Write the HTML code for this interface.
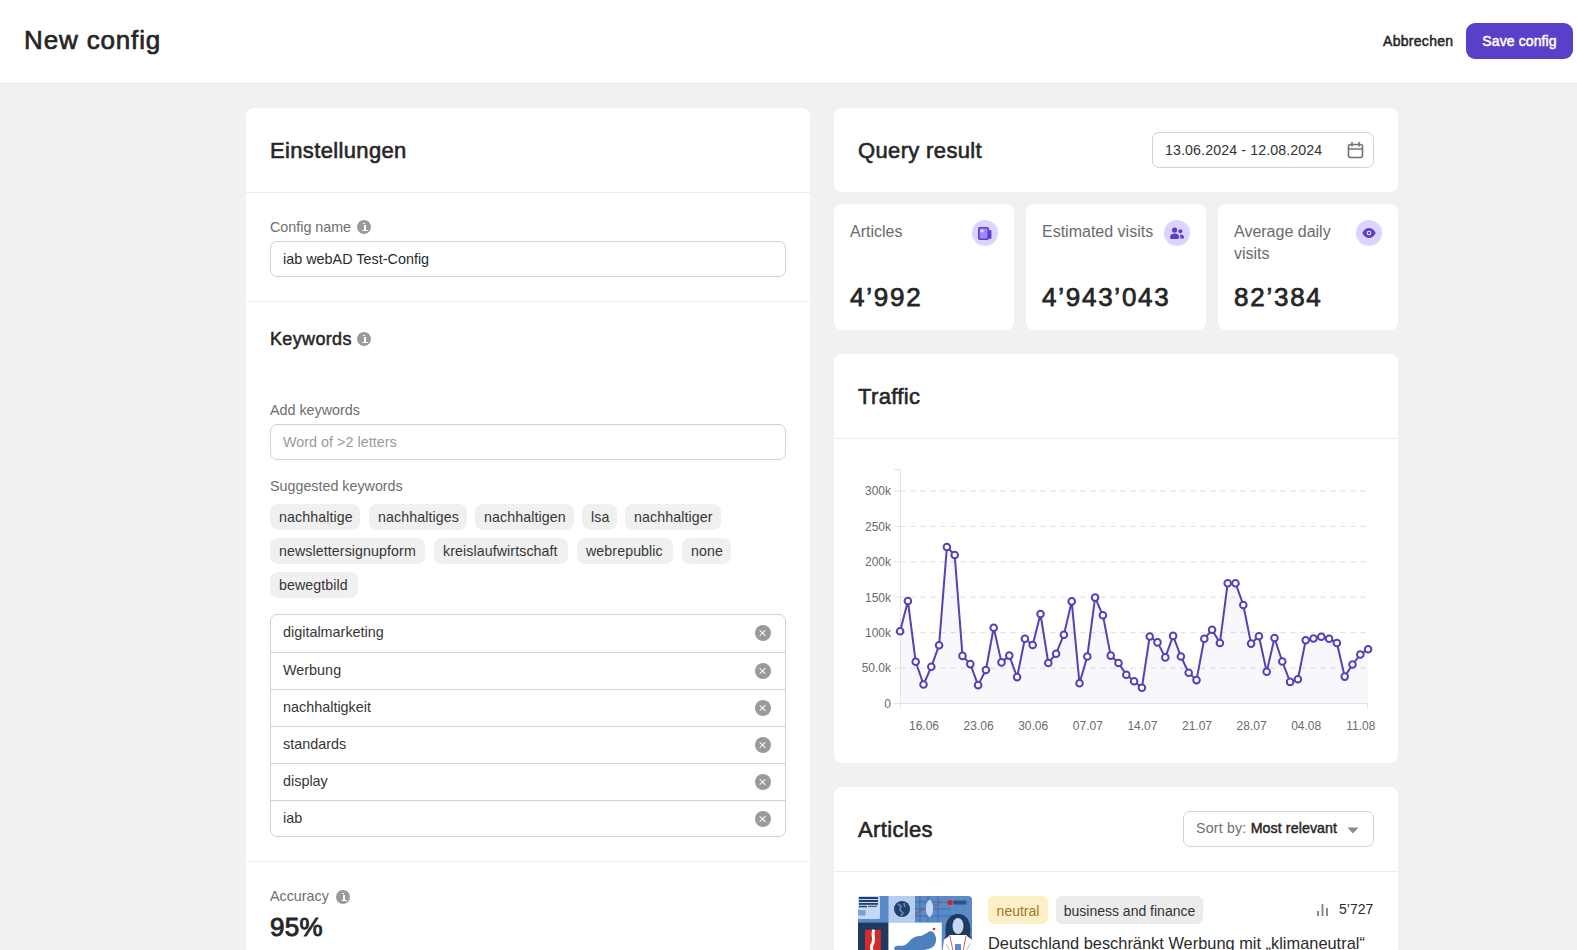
<!DOCTYPE html>
<html><head><meta charset="utf-8">
<style>
*{box-sizing:border-box;margin:0;padding:0}
html,body{width:1577px;height:950px;overflow:hidden;background:#f1f1f3;font-family:"Liberation Sans",sans-serif;color:#262626}
.abs{position:absolute}
#hdr{position:absolute;left:0;top:0;width:1577px;height:84px;background:#fff;border-bottom:1px solid #e8e8ea}
#hdr h1{position:absolute;left:24px;top:24px;font-size:26px;font-weight:400;-webkit-text-stroke:0.7px #262626;letter-spacing:0.85px;line-height:32px;color:#262626}
#cancel{position:absolute;left:1383px;top:32px;font-size:14px;font-weight:400;-webkit-text-stroke:0.5px #262626;line-height:18px;color:#262626;letter-spacing:0.3px}
#save{position:absolute;left:1466px;top:23px;width:107px;height:36px;background:#5a3fc8;border-radius:9px;color:#fff;font-size:14px;font-weight:400;-webkit-text-stroke:0.5px #fff;line-height:36px;text-align:center;letter-spacing:0.1px}
.card{position:absolute;background:#fff;border-radius:8px}
.divider{position:absolute;left:0;right:0;height:1px;background:#ececee}
.h2{position:absolute;font-size:22px;font-weight:400;-webkit-text-stroke:0.6px #262626;letter-spacing:0.35px;line-height:27px;color:#262626}
.label{position:absolute;font-size:14.3px;line-height:18px;color:#6e6e6e}
.info{display:inline-block;width:14px;height:14px;border-radius:50%;background:#9a9a9a;position:absolute}
.info:after{content:"";position:absolute;left:5px;top:5px;width:3px;height:5px;border-left:1px solid #9a9a9a;border-bottom:1.2px solid #fff;background:linear-gradient(#9a9a9a,#9a9a9a) 0 0/1px 1px no-repeat,linear-gradient(#fff,#fff) 1px 0/2px 5px no-repeat;box-sizing:content-box;padding:0 1px}
.info:before{content:"";position:absolute;left:6.2px;top:2.6px;width:1.8px;height:1.6px;background:#fff}
.input{position:absolute;border:1px solid #d2d2d4;border-radius:7px;background:#fff;font-size:14.4px;line-height:34px;padding-left:12px;color:#2b2b2b}
.chip{position:absolute;height:26px;background:#f0f0f1;border-radius:8px;font-size:14.2px;line-height:27px;letter-spacing:0.1px;padding:0 9px;color:#363636;white-space:nowrap}
.kwlist{position:absolute;border:1px solid #d2d2d4;border-radius:7px;overflow:hidden}
.kwrow{position:absolute;left:0;right:0;height:37px;border-top:1px solid #d2d2d4;font-size:14.4px;line-height:35.5px;padding-left:12px;color:#363636}
.kwrow{height:38px}
.xic{position:absolute;left:484px;top:10px;width:16px;height:16px;border-radius:50%;background:#9a9a9a}
.xic:before,.xic:after{content:"";position:absolute;left:7.4px;top:4px;width:1.2px;height:8px;background:#fff;transform:rotate(45deg)}
.xic:after{transform:rotate(-45deg)}
.slabel{position:absolute;left:16px;top:16.5px;font-size:16px;line-height:22px;color:#6b6b6e}
.sicon{position:absolute;left:138px;top:16px;width:26px;height:26px;border-radius:50%;background:#dcd3ff;display:flex;align-items:center;justify-content:center}
.sval{position:absolute;left:16px;top:77px;font-size:26px;font-weight:400;-webkit-text-stroke:0.75px #262626;line-height:32px;color:#262626;letter-spacing:1.75px}
.tag{position:absolute;height:27.5px;border-radius:6px;font-size:14px;line-height:30px;text-align:center;white-space:nowrap}
</style></head>
<body>
<div id="hdr">
  <h1>New config</h1>
  <div id="cancel">Abbrechen</div>
  <div id="save">Save config</div>
</div>

<!-- LEFT CARD -->
<div class="card" style="left:246px;top:108px;width:564px;height:900px">
  <div class="h2" style="left:24px;top:29px">Einstellungen</div>
  <div class="divider" style="top:84px"></div>
  <div class="label" style="left:24px;top:110px">Config name</div>
  <span class="info" style="left:111px;top:112px"></span>
  <div class="input" style="left:24px;top:133px;width:516px;height:36px">iab webAD Test-Config</div>
  <div class="divider" style="top:193px"></div>
  <div class="h2" style="left:24px;top:219px;font-size:18px;line-height:24px;-webkit-text-stroke:0.5px #262626">Keywords</div>
  <span class="info" style="left:111px;top:224px"></span>
  <div class="label" style="left:24px;top:293px">Add keywords</div>
  <div class="input" style="left:24px;top:316px;width:516px;height:36px;color:#9a9a9a">Word of &gt;2 letters</div>
  <div class="label" style="left:24px;top:369px">Suggested keywords</div>
  <div class="chip" style="left:24px;top:396px;width:90px">nachhaltige</div>
  <div class="chip" style="left:123px;top:396px;width:98px">nachhaltiges</div>
  <div class="chip" style="left:229px;top:396px;width:99px">nachhaltigen</div>
  <div class="chip" style="left:336px;top:396px;width:35px">lsa</div>
  <div class="chip" style="left:379px;top:396px;width:96px">nachhaltiger</div>
  <div class="chip" style="left:24px;top:430px;width:155px">newslettersignupform</div>
  <div class="chip" style="left:188px;top:430px;width:134px">kreislaufwirtschaft</div>
  <div class="chip" style="left:331px;top:430px;width:96px">webrepublic</div>
  <div class="chip" style="left:436px;top:430px;width:49px">none</div>
  <div class="chip" style="left:24px;top:464px;width:88px">bewegtbild</div>
  <div class="kwlist" style="left:24px;top:506px;width:516px;height:223px">
    <div class="kwrow" style="top:0px;border-top:none"><span>digitalmarketing</span><i class="xic"></i></div>
    <div class="kwrow" style="top:37px"><span>Werbung</span><i class="xic"></i></div>
    <div class="kwrow" style="top:74px"><span>nachhaltigkeit</span><i class="xic"></i></div>
    <div class="kwrow" style="top:111px"><span>standards</span><i class="xic"></i></div>
    <div class="kwrow" style="top:148px"><span>display</span><i class="xic"></i></div>
    <div class="kwrow" style="top:185px"><span>iab</span><i class="xic"></i></div>
  </div>
  <div class="divider" style="top:753px"></div>
  <div class="label" style="left:24px;top:779px">Accuracy</div>
  <span class="info" style="left:90px;top:782px"></span>
  <div class="abs" style="left:24px;top:803px;font-size:26px;font-weight:400;-webkit-text-stroke:0.9px #262626;letter-spacing:0.3px;line-height:32px;color:#262626">95%</div>
</div>

<!-- RIGHT COLUMN -->
<div class="card" style="left:834px;top:108px;width:564px;height:84px">
  <div class="h2" style="left:24px;top:29px">Query result</div>
  <div class="input" style="left:318px;top:24px;width:222px;height:36px;font-size:14.2px;letter-spacing:0.12px;color:#333">13.06.2024 - 12.08.2024
    <svg class="abs" style="left:194px;top:7.5px" width="17" height="18" viewBox="0 0 17 18"><g fill="none" stroke="#727272" stroke-width="1.6" stroke-linecap="round"><rect x="1.5" y="3.5" width="14" height="13" rx="2"/><path d="M1.5 8H15.5M5 1.5V5M12 1.5V5"/></g></svg>
  </div>
</div>
<div class="card" style="left:834px;top:204px;width:180px;height:126px">
  <div class="slabel">Articles</div>
  <div class="sicon"><svg width="14" height="13" viewBox="0 0 14 13"><rect x="0.8" y="0.8" width="9.4" height="11.4" rx="1" fill="#9c88ff" stroke="#5a3fc8" stroke-width="1.6"/><rect x="2.5" y="2.6" width="3" height="2.6" fill="#e6defe"/><rect x="11" y="3" width="2.4" height="9" rx="1" fill="#5a3fc8"/></svg></div>
  <div class="sval">4’992</div>
</div>
<div class="card" style="left:1026px;top:204px;width:180px;height:126px">
  <div class="slabel">Estimated visits</div>
  <div class="sicon"><svg width="14" height="13" viewBox="0 0 14 13"><circle cx="4.6" cy="3" r="2.6" fill="#5a3fc8"/><path d="M0 10.6C0 7.6 2 6.6 4.6 6.6S9.2 7.6 9.2 10.6C9.2 11.6 8.4 12 7.6 12H1.6C.8 12 0 11.6 0 10.6Z" fill="#5a3fc8"/><circle cx="10.4" cy="4.2" r="2" fill="#5a3fc8"/><path d="M10 7.6C12.6 7.4 14 8.6 14 10.4C14 11.3 13.4 11.6 12.8 11.6H10.2C10.4 10 10.4 8.8 10 7.6Z" fill="#5a3fc8"/></svg></div>
  <div class="sval">4’943’043</div>
</div>
<div class="card" style="left:1218px;top:204px;width:180px;height:126px">
  <div class="slabel">Average daily<br>visits</div>
  <div class="sicon"><svg width="14" height="10" viewBox="0 0 14 10"><path d="M0.3 5C2 1.6 4.4 0 7 0S12 1.6 13.7 5C12 8.4 9.6 10 7 10S2 8.4 0.3 5Z" fill="#5a3fc8"/><circle cx="7" cy="5" r="2.3" fill="#e6defe"/><circle cx="7" cy="5" r="1.1" fill="#3d2a96"/></svg></div>
  <div class="sval">82’384</div>
</div>
<div class="card" style="left:834px;top:354px;width:564px;height:409px">
  <div class="h2" style="left:24px;top:29px">Traffic</div>
  <div class="divider" style="top:84px"></div>
</div>
<div class="card" style="left:834px;top:787px;width:564px;height:300px;overflow:hidden">
  <div class="h2" style="left:24px;top:29px">Articles</div>
  <div class="input" style="left:349px;top:24px;width:191px;height:36px;font-size:14.2px;line-height:32.5px;color:#6e6e6e;letter-spacing:0.2px">Sort by: <span style="color:#262626;-webkit-text-stroke:0.45px #262626;letter-spacing:0.1px">Most relevant</span>
    <svg class="abs" style="left:163px;top:15px" width="12" height="7" viewBox="0 0 12 7"><path d="M0.5 0.5H11.5L6 6.5Z" fill="#8a8a8c"/></svg>
  </div>
  <div class="divider" style="top:84px"></div>
  <svg class="abs" style="left:24px;top:109px" width="114" height="60" viewBox="0 0 114 60">
    <defs><clipPath id="ic"><rect x="0" y="0" width="114" height="80" rx="4"/></clipPath></defs>
    <g clip-path="url(#ic)">
      <rect x="0" y="0" width="114" height="60" fill="#5a8ac8"/>
      <rect x="0" y="0" width="22" height="23" rx="1.5" fill="#c6d9f2"/>
      <g fill="#23406a"><rect x="1" y="1" width="19" height="2"/><rect x="1" y="4" width="19" height="2"/><rect x="1" y="7" width="19" height="1.8"/><rect x="1" y="9.8" width="8" height="1.5"/><rect x="10" y="9.8" width="9" height="1"/></g>
      <rect x="0" y="14" width="7.5" height="5.5" fill="#7aa2d6"/>
      <rect x="30.5" y="0" width="26.5" height="26.6" fill="#b6cff0"/>
      <circle cx="44" cy="13" r="8" fill="#23406a"/>
      <path d="M40 8 L43 10 L42 14 L45 17 L43 20 M46 7 L47 11" stroke="#5a8ac8" stroke-width="1.6" fill="none"/>
      <g stroke="#3a66a0" stroke-width="0.8"><path d="M57 6H100M57 13H92M57 20H94M62 0V26M70 0V26M80 0V26"/></g>
      <ellipse cx="71.5" cy="12.5" rx="3.6" ry="8.4" fill="#c6d9f2"/>
      <path d="M57 18L66 13M75 8L78 10L83 6" stroke="#b44" stroke-width="1" fill="none"/>
      <circle cx="92" cy="6.5" r="2.6" fill="#d82020"/>
      <rect x="95.5" y="4.5" width="13" height="4" fill="#23406a" opacity="0.75"/>
      <rect x="0" y="26.6" width="30.5" height="40" fill="#1e3a5e"/>
      <rect x="7" y="33.7" width="15.8" height="30" fill="#d42a2a"/>
      <path d="M16 33.7 C13 39 18 43 14 49 C12 53 16 56 15 60" stroke="#fff" stroke-width="3" fill="none"/>
      <rect x="30.5" y="26.6" width="53.2" height="40" fill="#fff"/>
      <path d="M36 52 C38 48 43 51 47 49 L51 46 C54 41 59 40 63 40 L69 37 C72 34 76 35 77 39 C79 43 78 47 76 50 C72 54 62 55 56 54 L46 56 C42 56 37 56 36 52Z" fill="#4e80c0"/>
      <circle cx="76" cy="33" r="1.3" fill="#d82020"/>
      <path d="M88 40 C86 28 90 18 100 18 C110 18 114 28 112 40 L113.6 42 L86 42Z" fill="#1e3a5e"/>
      <ellipse cx="100" cy="30" rx="5.5" ry="8" fill="#c6d9f2"/>
      <path d="M83.7 60 L86 44 L92 39 L108 39 L114 44 L114 60Z" fill="#fff"/>
      <path d="M92 40 L96 60 M108 40 L104 60" stroke="#c33" stroke-width="0.8"/>
      <rect x="97" y="48" width="6" height="12" fill="#5a8ac8"/>
      <path d="M88 48 L94 58 M112 48 L106 58" stroke="#889" stroke-width="0.6"/>
    </g>
  </svg>
  <div class="tag" style="left:154px;top:109px;width:60px;background:#fdefc6;color:#9b7a2c">neutral</div>
  <div class="tag" style="left:222px;top:109px;width:147px;background:#ececed;color:#333">business and finance</div>
  <svg class="abs" style="left:483px;top:117px" width="11" height="12" viewBox="0 0 11 12"><g fill="#8c8c8e"><rect x="0" y="7" width="2" height="5"/><rect x="4.5" y="0" width="2" height="12"/><rect x="9" y="4" width="2" height="8"/></g></svg>
  <div class="abs" style="left:505px;top:113px;font-size:14px;line-height:18px;color:#2b2b2b">5’727</div>
  <div class="abs" style="left:154px;top:146px;font-size:16.4px;line-height:20px;color:#2b2b2b;white-space:nowrap">Deutschland beschränkt Werbung mit „klimaneutral“</div>
</div>
<!--CHART-->
<svg class="abs" style="left:0;top:0;pointer-events:none" width="1577" height="950" viewBox="0 0 1577 950">
<g font-family="Liberation Sans" font-size="12" fill="#6a6a6e"><line x1="894" y1="703.5" x2="900.5" y2="703.5" stroke="#e3e3e6" stroke-width="1"/><text x="891" y="707.7" text-anchor="end">0</text><line x1="900.5" y1="668.1" x2="1368" y2="668.1" stroke="#dcdcdf" stroke-width="1" stroke-dasharray="5 5"/><line x1="894" y1="668.1" x2="900.5" y2="668.1" stroke="#e3e3e6" stroke-width="1"/><text x="891" y="672.3" text-anchor="end">50.0k</text><line x1="900.5" y1="632.7" x2="1368" y2="632.7" stroke="#dcdcdf" stroke-width="1" stroke-dasharray="5 5"/><line x1="894" y1="632.7" x2="900.5" y2="632.7" stroke="#e3e3e6" stroke-width="1"/><text x="891" y="636.9" text-anchor="end">100k</text><line x1="900.5" y1="597.2" x2="1368" y2="597.2" stroke="#dcdcdf" stroke-width="1" stroke-dasharray="5 5"/><line x1="894" y1="597.2" x2="900.5" y2="597.2" stroke="#e3e3e6" stroke-width="1"/><text x="891" y="601.5" text-anchor="end">150k</text><line x1="900.5" y1="561.8" x2="1368" y2="561.8" stroke="#dcdcdf" stroke-width="1" stroke-dasharray="5 5"/><line x1="894" y1="561.8" x2="900.5" y2="561.8" stroke="#e3e3e6" stroke-width="1"/><text x="891" y="566.0" text-anchor="end">200k</text><line x1="900.5" y1="526.4" x2="1368" y2="526.4" stroke="#dcdcdf" stroke-width="1" stroke-dasharray="5 5"/><line x1="894" y1="526.4" x2="900.5" y2="526.4" stroke="#e3e3e6" stroke-width="1"/><text x="891" y="530.6" text-anchor="end">250k</text><line x1="900.5" y1="491.0" x2="1368" y2="491.0" stroke="#dcdcdf" stroke-width="1" stroke-dasharray="5 5"/><line x1="894" y1="491.0" x2="900.5" y2="491.0" stroke="#e3e3e6" stroke-width="1"/><text x="891" y="495.2" text-anchor="end">300k</text><text x="924.0" y="730" text-anchor="middle">16.06</text><text x="978.6" y="730" text-anchor="middle">23.06</text><text x="1033.2" y="730" text-anchor="middle">30.06</text><text x="1087.8" y="730" text-anchor="middle">07.07</text><text x="1142.4" y="730" text-anchor="middle">14.07</text><text x="1197.0" y="730" text-anchor="middle">21.07</text><text x="1251.6" y="730" text-anchor="middle">28.07</text><text x="1306.2" y="730" text-anchor="middle">04.08</text><text x="1360.8" y="730" text-anchor="middle">11.08</text></g>
<path d="M900.1 631.2 L907.9 601.0 L915.7 661.8 L923.5 684.5 L931.3 666.8 L939.1 645.2 L946.9 547.0 L954.7 555.0 L962.5 655.9 L970.3 664.1 L978.1 685.1 L985.9 670.0 L993.7 627.7 L1001.5 662.4 L1009.3 655.6 L1017.1 677.1 L1024.9 638.8 L1032.7 645.0 L1040.5 614.0 L1048.3 663.0 L1056.1 653.7 L1063.9 634.7 L1071.7 601.4 L1079.5 683.3 L1087.3 656.5 L1095.1 597.6 L1102.9 615.3 L1110.7 655.6 L1118.5 663.0 L1126.3 674.8 L1134.1 681.3 L1141.9 687.8 L1149.7 636.5 L1157.5 642.4 L1165.3 657.4 L1173.1 635.9 L1180.9 656.5 L1188.7 672.7 L1196.5 680.1 L1204.3 638.8 L1212.1 629.7 L1219.9 643.0 L1227.7 583.2 L1235.5 583.2 L1243.3 605.0 L1251.1 643.6 L1258.9 636.2 L1266.7 671.8 L1274.5 638.0 L1282.3 661.5 L1290.1 681.9 L1297.9 679.2 L1305.7 640.3 L1313.5 638.5 L1321.3 636.8 L1329.1 638.8 L1336.9 643.0 L1344.7 676.6 L1352.5 664.5 L1360.3 654.5 L1368.1 649.2 L1368.1 703.5 L900.1 703.5 Z" fill="#5641b6" fill-opacity="0.045"/>
<g stroke="#e3e3e6" stroke-width="1" fill="none"><path d="M900.5 469V709M894 469.5H900.5M894 703.5H1368M1367.5 703V709"/></g>
<path d="M900.1 631.2 L907.9 601.0 L915.7 661.8 L923.5 684.5 L931.3 666.8 L939.1 645.2 L946.9 547.0 L954.7 555.0 L962.5 655.9 L970.3 664.1 L978.1 685.1 L985.9 670.0 L993.7 627.7 L1001.5 662.4 L1009.3 655.6 L1017.1 677.1 L1024.9 638.8 L1032.7 645.0 L1040.5 614.0 L1048.3 663.0 L1056.1 653.7 L1063.9 634.7 L1071.7 601.4 L1079.5 683.3 L1087.3 656.5 L1095.1 597.6 L1102.9 615.3 L1110.7 655.6 L1118.5 663.0 L1126.3 674.8 L1134.1 681.3 L1141.9 687.8 L1149.7 636.5 L1157.5 642.4 L1165.3 657.4 L1173.1 635.9 L1180.9 656.5 L1188.7 672.7 L1196.5 680.1 L1204.3 638.8 L1212.1 629.7 L1219.9 643.0 L1227.7 583.2 L1235.5 583.2 L1243.3 605.0 L1251.1 643.6 L1258.9 636.2 L1266.7 671.8 L1274.5 638.0 L1282.3 661.5 L1290.1 681.9 L1297.9 679.2 L1305.7 640.3 L1313.5 638.5 L1321.3 636.8 L1329.1 638.8 L1336.9 643.0 L1344.7 676.6 L1352.5 664.5 L1360.3 654.5 L1368.1 649.2" fill="none" stroke="#5641b6" stroke-width="2" stroke-linejoin="round"/>
<g fill="#fff" stroke="#5641b6" stroke-width="2"><circle cx="900.1" cy="631.2" r="3.3"/><circle cx="907.9" cy="601.0" r="3.3"/><circle cx="915.7" cy="661.8" r="3.3"/><circle cx="923.5" cy="684.5" r="3.3"/><circle cx="931.3" cy="666.8" r="3.3"/><circle cx="939.1" cy="645.2" r="3.3"/><circle cx="946.9" cy="547.0" r="3.3"/><circle cx="954.7" cy="555.0" r="3.3"/><circle cx="962.5" cy="655.9" r="3.3"/><circle cx="970.3" cy="664.1" r="3.3"/><circle cx="978.1" cy="685.1" r="3.3"/><circle cx="985.9" cy="670.0" r="3.3"/><circle cx="993.7" cy="627.7" r="3.3"/><circle cx="1001.5" cy="662.4" r="3.3"/><circle cx="1009.3" cy="655.6" r="3.3"/><circle cx="1017.1" cy="677.1" r="3.3"/><circle cx="1024.9" cy="638.8" r="3.3"/><circle cx="1032.7" cy="645.0" r="3.3"/><circle cx="1040.5" cy="614.0" r="3.3"/><circle cx="1048.3" cy="663.0" r="3.3"/><circle cx="1056.1" cy="653.7" r="3.3"/><circle cx="1063.9" cy="634.7" r="3.3"/><circle cx="1071.7" cy="601.4" r="3.3"/><circle cx="1079.5" cy="683.3" r="3.3"/><circle cx="1087.3" cy="656.5" r="3.3"/><circle cx="1095.1" cy="597.6" r="3.3"/><circle cx="1102.9" cy="615.3" r="3.3"/><circle cx="1110.7" cy="655.6" r="3.3"/><circle cx="1118.5" cy="663.0" r="3.3"/><circle cx="1126.3" cy="674.8" r="3.3"/><circle cx="1134.1" cy="681.3" r="3.3"/><circle cx="1141.9" cy="687.8" r="3.3"/><circle cx="1149.7" cy="636.5" r="3.3"/><circle cx="1157.5" cy="642.4" r="3.3"/><circle cx="1165.3" cy="657.4" r="3.3"/><circle cx="1173.1" cy="635.9" r="3.3"/><circle cx="1180.9" cy="656.5" r="3.3"/><circle cx="1188.7" cy="672.7" r="3.3"/><circle cx="1196.5" cy="680.1" r="3.3"/><circle cx="1204.3" cy="638.8" r="3.3"/><circle cx="1212.1" cy="629.7" r="3.3"/><circle cx="1219.9" cy="643.0" r="3.3"/><circle cx="1227.7" cy="583.2" r="3.3"/><circle cx="1235.5" cy="583.2" r="3.3"/><circle cx="1243.3" cy="605.0" r="3.3"/><circle cx="1251.1" cy="643.6" r="3.3"/><circle cx="1258.9" cy="636.2" r="3.3"/><circle cx="1266.7" cy="671.8" r="3.3"/><circle cx="1274.5" cy="638.0" r="3.3"/><circle cx="1282.3" cy="661.5" r="3.3"/><circle cx="1290.1" cy="681.9" r="3.3"/><circle cx="1297.9" cy="679.2" r="3.3"/><circle cx="1305.7" cy="640.3" r="3.3"/><circle cx="1313.5" cy="638.5" r="3.3"/><circle cx="1321.3" cy="636.8" r="3.3"/><circle cx="1329.1" cy="638.8" r="3.3"/><circle cx="1336.9" cy="643.0" r="3.3"/><circle cx="1344.7" cy="676.6" r="3.3"/><circle cx="1352.5" cy="664.5" r="3.3"/><circle cx="1360.3" cy="654.5" r="3.3"/><circle cx="1368.1" cy="649.2" r="3.3"/></g>
</svg>
<!--/CHART-->
</body></html>
